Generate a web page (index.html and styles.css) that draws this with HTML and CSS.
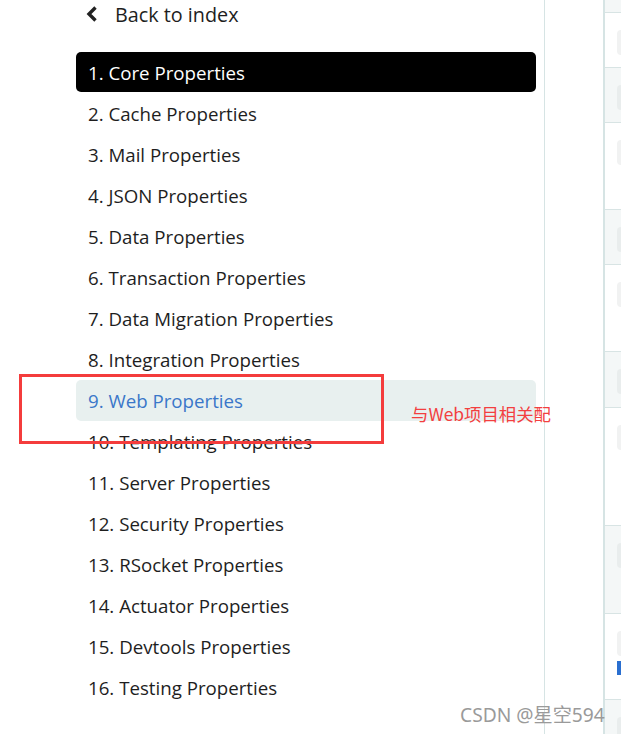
FILE: index.html
```html
<!DOCTYPE html>
<html>
<head>
<meta charset="utf-8">
<link rel="stylesheet" href="styles.css">
</head>
<body>
<div class="page">
  <aside class="sidebar">
    <a class="back">
      <svg class="chev" width="14" height="18" viewBox="0 0 14 18"><path d="M10.5 2.5 L4 9 L10.5 15.5" fill="none" stroke="#222" stroke-width="3.4" stroke-linejoin="miter"/></svg>
      <span>Back to index</span>
    </a>
    <ul class="nav">
      <li class="item active">1. Core Properties</li>
      <li class="item">2. Cache Properties</li>
      <li class="item">3. Mail Properties</li>
      <li class="item">4. JSON Properties</li>
      <li class="item">5. Data Properties</li>
      <li class="item">6. Transaction Properties</li>
      <li class="item">7. Data Migration Properties</li>
      <li class="item">8. Integration Properties</li>
      <li class="item hover">9. Web Properties</li>
      <li class="item">10. Templating Properties</li>
      <li class="item">11. Server Properties</li>
      <li class="item">12. Security Properties</li>
      <li class="item">13. RSocket Properties</li>
      <li class="item">14. Actuator Properties</li>
      <li class="item">15. Devtools Properties</li>
      <li class="item">16. Testing Properties</li>
    </ul>
  </aside>
  <div class="gutter"></div>
  <div class="table">
    <div class="row alt" style="height:13px"></div>
    <div class="row" style="height:55px"><span class="code"></span></div>
    <div class="row alt" style="height:55px"><span class="code"></span></div>
    <div class="row" style="height:87px"><span class="code"></span></div>
    <div class="row alt" style="height:55px"><span class="code"></span></div>
    <div class="row" style="height:87px"><span class="code"></span></div>
    <div class="row alt" style="height:56px"><span class="code"></span></div>
    <div class="row" style="height:118px"><span class="code"></span></div>
    <div class="row alt" style="height:88px"><span class="code"></span></div>
    <div class="row" style="height:86px"><span class="code"></span><span class="link"></span></div>
    <div class="row alt" style="height:40px"><span class="code"></span></div>
  </div>
</div>
<div class="mark"></div>
<div class="note">与Web项目相关配</div>
<div class="watermark">CSDN @星空594</div>
</body>
</html>
```

FILE: styles.css
```css
html, body {
  margin: 0;
  padding: 0;
  background: #fff;
  width: 621px;
  height: 734px;
  overflow: hidden;
}
body {
  font-family: "Open Sans", "Noto Sans", sans-serif;
  color: #1e1e1e;
  position: relative;
}
.page {
  display: flex;
  height: 734px;
  width: 621px;
  overflow: hidden;
}
.sidebar {
  width: 545px;
  flex: none;
  border-right: 1px solid #d6e4e4;
  padding-left: 76px;
  box-sizing: border-box;
}
.back {
  display: flex;
  align-items: center;
  height: 28px;
  padding-left: 9px;
  font-size: 19.8px;
  color: #1e1e1e;
}
.chev {
  margin-right: 16px;
}
.nav {
  list-style: none;
  margin: 24px 0 0 0;
  padding: 0;
  width: 460px;
}
.item {
  height: 41px;
  line-height: 42px;
  padding-left: 12px;
  font-size: 18.7px;
  border-radius: 5px;
  white-space: nowrap;
}
.item.active {
  background: #000;
  color: #fff;
  height: 40px;
  line-height: 42px;
  margin-bottom: 1px;
}
.item.hover {
  background: #e8f0ef;
  color: #3a77c9;
}
.gutter {
  width: 58px;
  flex: none;
}
.table {
  flex: 1;
  min-width: 0;
  overflow: hidden;
  border-left: 2px solid #d6e4e4;
  display: flex;
  flex-direction: column;
}
.row {
  flex: none;
  border-bottom: 1px solid #d8e4e4;
  box-sizing: border-box;
  padding: 17px 0 0 12px;
  display: flex;
  flex-direction: column;
  gap: 5px;
}
.row.alt {
  background: #f4f7f7;
}
.row:first-child {
  padding: 0;
}
.code {
  display: block;
  height: 25px;
  width: 40px;
  background: #f1f2f2;
  border-radius: 4px;
}
.alt .code {
  background: #e9eded;
}
.link {
  display: block;
  width: 4px;
  height: 14px;
  background: #2a6fd0;
}
.mark {
  position: absolute;
  left: 19px;
  top: 374px;
  width: 359px;
  height: 64px;
  border: 3px solid #f43c3c;
}
.note {
  position: absolute;
  left: 411px;
  top: 401px;
  font-family: "Noto Sans CJK SC", "Microsoft YaHei", sans-serif;
  font-size: 17.4px;
  color: #f33f3f;
  line-height: 26px;
}
.watermark {
  position: absolute;
  left: 460px;
  top: 701px;
  font-family: "Noto Sans", "Noto Sans CJK SC", sans-serif;
  font-size: 19.2px;
  color: #9a9a9a;
  line-height: 28px;
}
```
